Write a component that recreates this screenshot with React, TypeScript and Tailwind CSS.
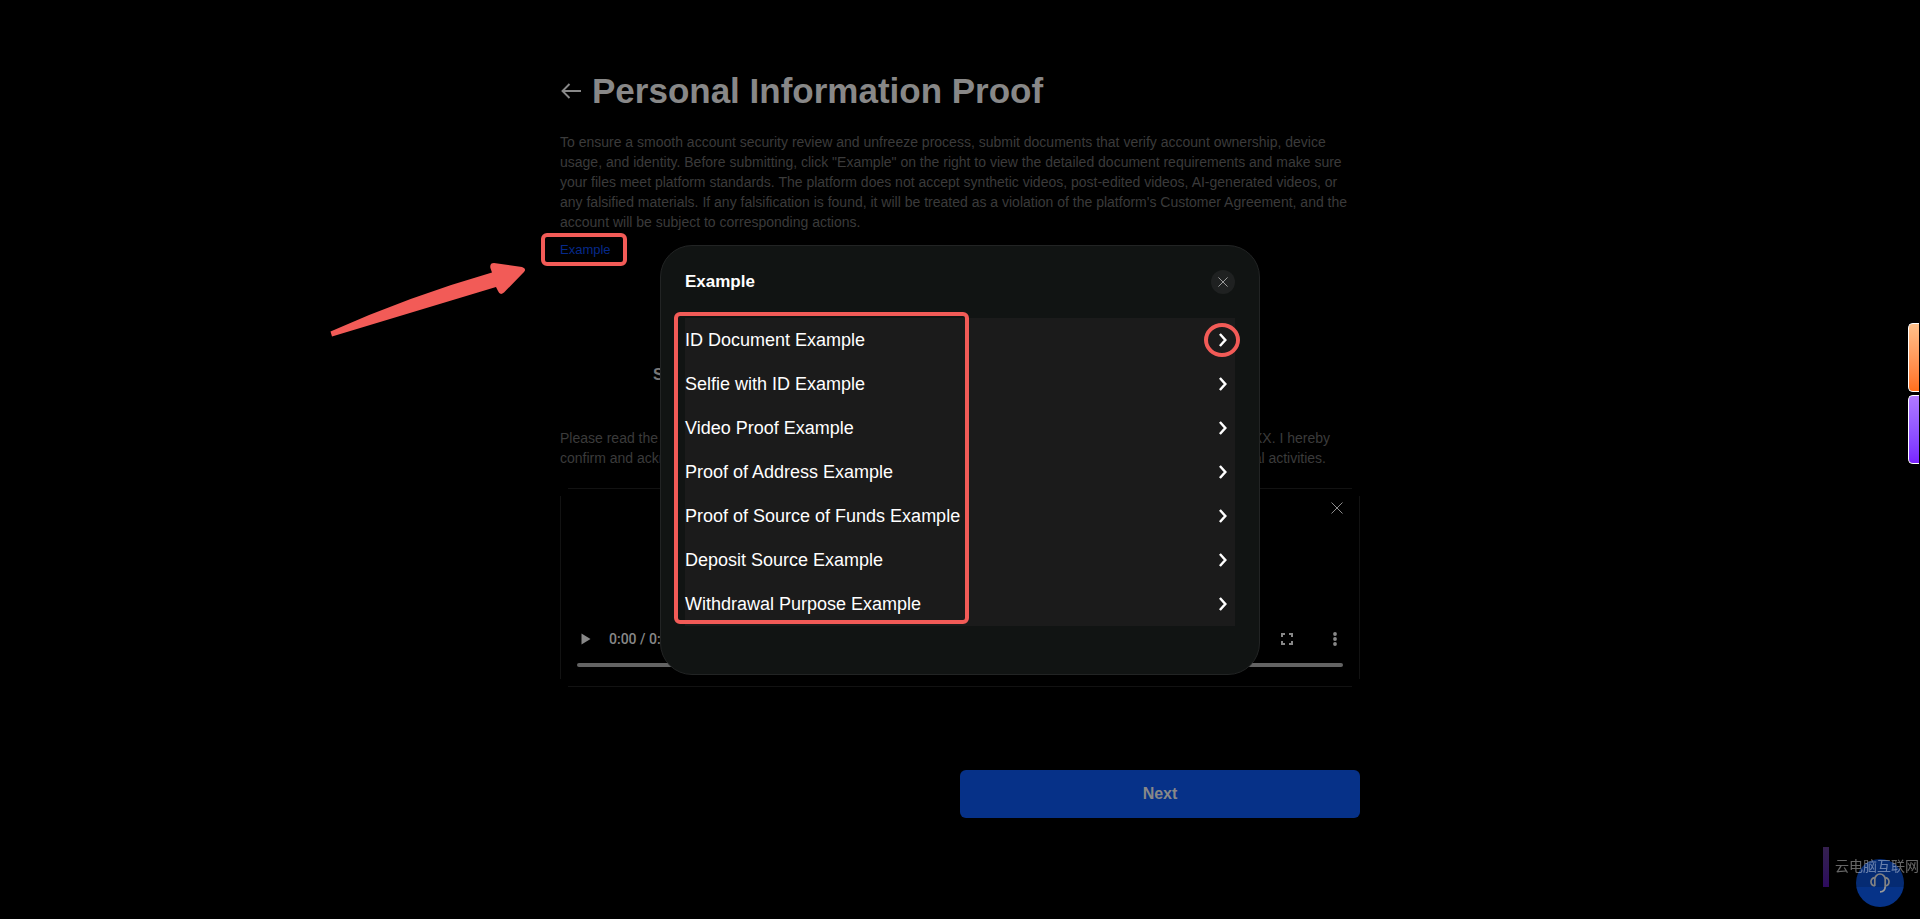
import React, { useState } from "react";

interface IconProps {
    className?: string;
}

const EXAMPLES = [
    "ID Document Example",
    "Selfie with ID Example",
    "Video Proof Example",
    "Proof of Address Example",
    "Proof of Source of Funds Example",
    "Deposit Source Example",
    "Withdrawal Purpose Example",
];

const BackIcon: React.FC<IconProps> = ({ className }) => (
    <svg viewBox="0 0 20 16" className={className} fill="none" stroke="currentColor" strokeWidth="1.9">
        <path d="M20 8H1.5M8.500 1L1.5 8l7 7" />
    </svg>
);

const CloseIcon: React.FC<IconProps> = ({ className }) => (
    <svg viewBox="0 0 12 12" className={className} fill="none" stroke="currentColor" strokeWidth="1">
        <path d="M0.5 0.5l11 11M11.5 0.5l-11 11" />
    </svg>
);

const ChevronIcon: React.FC<IconProps> = ({ className }) => (
    <svg viewBox="0 0 8 14" className={className} fill="none" stroke="currentColor" strokeWidth="2.5">
        <path d="M0.900 1l5.400 6L0.900 13" />
    </svg>
);

const HeadsetIcon: React.FC<IconProps> = ({ className }) => (
    <svg viewBox="0 0 20 20" className={className} fill="none" stroke="currentColor" strokeWidth="1.7">
        <path d="M4.800 13V6.200a5.200 5.200 0 0 1 10.400 0V13.500c0 3.500-2 5.300-5.200 5.300" />
        <path d="M4.800 4.600C2.500 5 1 6.500 1 8.800s1.500 3.900 3.800 4.200M15.200 4.600C17.500 5 19 6.500 19 8.800s-1.500 3.900-3.800 4.200" />
    </svg>
);

const ExampleDialog: React.FC<{ onClose: () => void }> = ({ onClose }) => (
    <div className="fixed inset-0 z-10 flex items-center justify-center">
        <div
            role="dialog"
            aria-labelledby="example-title"
            className="w-full max-w-[600px] rounded-[32px] border border-[#222424] bg-[#111413] px-6 pt-6 pb-12 text-white"
        >
            <div className="mb-6 flex h-6 items-center justify-between">
                <h2 id="example-title" className="text-[17px] font-bold">Example</h2>
                <button
                    type="button"
                    aria-label="Close"
                    onClick={onClose}
                    className="flex size-6 items-center justify-center rounded-full bg-[#1f2121] text-[#b5b5b5]"
                >
                    <CloseIcon className="size-[10px]" />
                </button>
            </div>
            <div className="relative bg-[#1b1b1b]">
                <ul>
                    {EXAMPLES.map((name) => (
                        <li key={name}>
                            <button
                                type="button"
                                className="flex h-11 w-full items-center justify-between pr-2 text-left text-lg"
                            >
                                {name}
                                <ChevronIcon className="h-[14px] w-2" />
                            </button>
                        </li>
                    ))}
                </ul>
                <div className="pointer-events-none absolute -top-1.5 -left-[11px] h-[312px] w-[295px] rounded-md border-4 border-[#f25b57]" />
                <div className="pointer-events-none absolute top-[5px] -right-[5px] h-[34px] w-9 rounded-[50%] border-4 border-[#f25b57]" />
            </div>
        </div>
    </div>
);

const VideoPlayer: React.FC = () => (
    <div className="relative mt-5 flex h-[199px] flex-col justify-end px-[17px] pb-5">
        {/* frame with open corners */}
        <div className="pointer-events-none absolute inset-x-2 inset-y-0 border-y border-[#121212]" />
        <div className="pointer-events-none absolute inset-x-0 inset-y-2 border-x border-[#121212]" />
        <button type="button" aria-label="Remove video" className="absolute top-[14px] right-[17px] text-[#8c8c8c]">
            <CloseIcon className="size-3" />
        </button>
        <div className="mb-[14px] flex h-5 items-center text-sm text-[#888]">
            <button type="button" aria-label="Play" className="ml-1">
                <svg viewBox="0 0 10 12" className="h-3 w-[10px]" fill="currentColor">
                    <path d="M0.500 0.500v11l9-5.500z" />
                </svg>
            </button>
            <span className="ml-[18px] font-[Roboto,sans-serif] font-medium">0:00 / 0:00</span>
            <button type="button" aria-label="Full screen" className="ml-auto">
                <svg viewBox="0 0 12 12" className="size-3" fill="none" stroke="currentColor" strokeWidth="2">
                    <path d="M1 4V1h3M8 1h3v3M11 8v3H8M4 11H1V8" />
                </svg>
            </button>
            <button type="button" aria-label="More options" className="mr-[6px] ml-10">
                <svg viewBox="0 0 4 14" className="h-[14px] w-1" fill="currentColor">
                    <circle cx="2" cy="2" r="1.900" />
                    <circle cx="2" cy="7" r="1.900" />
                    <circle cx="2" cy="12" r="1.900" />
                </svg>
            </button>
        </div>
        <input
            type="range"
            aria-label="Video position"
            defaultValue={0}
            className="block h-1 w-full appearance-none rounded-full bg-[#636363] [&::-webkit-slider-thumb]:appearance-none"
        />
    </div>
);

const SideWidgets: React.FC = () => (
    <>
        <div className="fixed top-[323px] right-px z-20 flex flex-col gap-[3px]">
            <button
                type="button"
                aria-label="Orange tab"
                className="h-[69px] w-[11px] rounded-l-[5px] border border-r-0 border-white bg-linear-to-b from-[#ffc08a] to-[#ff6f1a]"
            />
            <button
                type="button"
                aria-label="Purple tab"
                className="h-[69px] w-[11px] rounded-l-[5px] border border-r-0 border-white bg-linear-to-b from-[#b078ff] to-[#7a22ff]"
            />
        </div>
        <button
            type="button"
            aria-label="Support"
            className="fixed right-4 bottom-3 flex size-12 items-center justify-center rounded-full bg-[#063388] text-[#9a9a9a]"
        >
            <HeadsetIcon className="size-5" />
        </button>
        <div className="pointer-events-none fixed right-0 bottom-8 flex h-10 w-[97px] items-center overflow-hidden bg-black/15">
            <div className="h-full w-1.5 shrink-0 bg-linear-to-b from-[#35204f] to-[#2d0a5e]" />
            <span className="mb-1 ml-1.5 shrink-0 font-['Noto_Sans_CJK_SC',sans-serif] text-sm whitespace-nowrap text-white/40">
                云电脑互联网
            </span>
        </div>
    </>
);

const App: React.FC = () => {
    const [open, setOpen] = useState(true);

    return (
        <div className="min-h-screen bg-black px-4 pt-[69px] font-['Liberation_Sans',Arial,sans-serif]">
            <main className="mx-auto max-w-[800px]">
                <header className="flex h-11 items-center gap-[11px] pl-px text-[#888]">
                    <button type="button" aria-label="Back">
                        <BackIcon className="h-4 w-5" />
                    </button>
                    <h1 className="text-[35px] font-bold whitespace-nowrap">Personal Information Proof</h1>
                </header>

                <p className="mt-[19px] text-sm leading-5 text-[#3b3b3b]">
                    To ensure a smooth account security review and unfreeze process, submit documents that verify
                    account ownership, device usage, and identity. Before submitting, click "Example" on the right to
                    view the detailed document requirements and make sure your files meet platform standards. The
                    platform does not accept synthetic videos, post-edited videos, AI-generated videos, or any
                    falsified materials. If any falsification is found, it will be treated as a violation of the
                    platform's Customer Agreement, and the account will be subject to corresponding actions.
                </p>

                <div className="relative mt-2 h-5">
                    <button
                        type="button"
                        onClick={() => setOpen(true)}
                        className="block text-[13px] leading-5 text-[#06298a]"
                    >
                        Example
                    </button>
                    <div className="pointer-events-none absolute -top-[7px] -left-[19px] h-[33px] w-[86px] rounded-md border-4 border-[#f25b57]" />
                    <svg viewBox="0 0 196 74" className="absolute top-[23px] -left-[230px] h-[74px] w-[196px]" fill="#f25b57">
                        <path d="M0.500 68.500Q80 33 162 9.500L160.400 5Q159.500 0 164 0L192 4Q197 5.500 194 9L174 29.500Q170 33 168 28L166 24L2 73.500z" />
                    </svg>
                </div>

                <p className="mt-[105px] pl-[93px] text-base leading-5 font-bold text-[#777]">S</p>

                <div className="mt-[43px] pr-[30px] text-sm leading-5 text-[#3b3b3b]">
                    <p className="flex justify-between">
                        <span>Please read the</span>
                        <span>XX. I hereby</span>
                    </p>
                    <p className="flex justify-between pr-1">
                        <span>confirm and ackn</span>
                        <span>al activities.</span>
                    </p>
                </div>

                <VideoPlayer />

                <div className="mt-[83px] flex justify-end">
                    <button type="button" className="h-12 w-1/2 rounded-md bg-[#063188] font-bold text-[#888]">
                        Next
                    </button>
                </div>
            </main>

            {open && <ExampleDialog onClose={() => setOpen(false)} />}
            <SideWidgets />
        </div>
    );
};

export default App;
